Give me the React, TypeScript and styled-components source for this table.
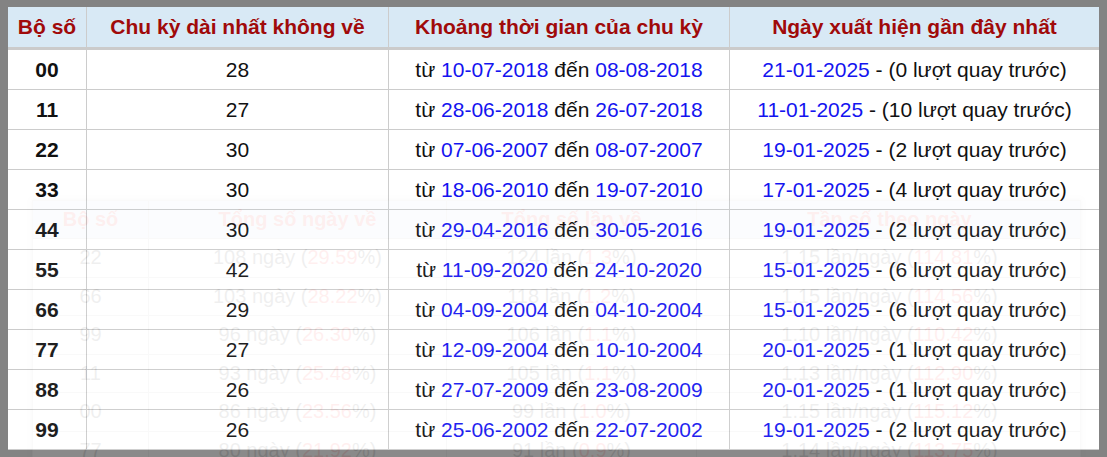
import React from "react";
import styled, { createGlobalStyle } from "styled-components";

const Global = createGlobalStyle`
  html, body { margin: 0; padding: 0; background: #ffffff; overflow: hidden; }
  body { font-family: "Liberation Sans", Arial, sans-serif; }
`;

const Frame = styled.div`
  position: relative;
  width: 1107px;
  height: 457px;
  box-sizing: border-box;
  border-style: solid;
  border-color: #838383;
  border-width: 7px 8px 7px 8px;
  background: #ffffff;
  font-family: "Liberation Sans", Arial, sans-serif;
`;

const Row = styled.div<{ $head?: boolean }>`
  display: grid;
  grid-template-columns: 78px 302px 341px 370px;
  height: ${(p) => (p.$head ? 43 : 40)}px;
  box-sizing: border-box;
  background: ${(p) => (p.$head ? "#d8e9f5" : "#ffffff")};
  border-bottom: ${(p) => (p.$head ? "3px solid #cbcbcb" : "1px solid #cccccc")};
`;

const Cell = styled.div<{ $head?: boolean; $bold?: boolean }>`
  display: flex;
  align-items: center;
  justify-content: center;
  white-space: nowrap;
  font-size: 21px;
  font-weight: ${(p) => (p.$head || p.$bold ? 700 : 400)};
  color: ${(p) => (p.$head ? "#a00a0a" : "#111111")};
  & + & { border-left: 1px solid #cccccc; }
`;

const DateText = styled.span`
  color: #1414f0;
`;

const Ghost = styled.div`
  position: absolute;
  left: 24px;
  top: 193px;
  width: 1049px;
  height: 257px;
  box-sizing: border-box;
  background: #ffffff;
  border: 1px solid #bbb;
  border-bottom: none;
  box-shadow: 0 0 4px rgba(0, 0, 0, 0.4);
  opacity: 0.06;
  pointer-events: none;
  overflow: hidden;
`;

const GhostRow = styled.div<{ $head?: boolean }>`
  display: grid;
  grid-template-columns: 115px 298px 250px 386px;
  height: ${(p) => (p.$head ? 38 : 38.5)}px;
  box-sizing: border-box;
  background: ${(p) => (p.$head ? "#c4def2" : "transparent")};
  border-bottom: 1px solid #aaa;
`;

const GhostCell = styled.div<{ $head?: boolean }>`
  display: flex;
  align-items: center;
  justify-content: center;
  white-space: nowrap;
  font-size: 20px;
  font-weight: ${(p) => (p.$head ? 700 : 400)};
  color: ${(p) => (p.$head ? "#e00000" : "#000000")};
  & + & { border-left: 1px solid #aaa; }
`;

const Pct = styled.span`
  color: #ff0000;
`;

type Item = {
  num: string;
  len: number;
  from: string;
  to: string;
  last: string;
  ago: number;
};

const items: Item[] = [
  { num: "00", len: 28, from: "10-07-2018", to: "08-08-2018", last: "21-01-2025", ago: 0 },
  { num: "11", len: 27, from: "28-06-2018", to: "26-07-2018", last: "11-01-2025", ago: 10 },
  { num: "22", len: 30, from: "07-06-2007", to: "08-07-2007", last: "19-01-2025", ago: 2 },
  { num: "33", len: 30, from: "18-06-2010", to: "19-07-2010", last: "17-01-2025", ago: 4 },
  { num: "44", len: 30, from: "29-04-2016", to: "30-05-2016", last: "19-01-2025", ago: 2 },
  { num: "55", len: 42, from: "11-09-2020", to: "24-10-2020", last: "15-01-2025", ago: 6 },
  { num: "66", len: 29, from: "04-09-2004", to: "04-10-2004", last: "15-01-2025", ago: 6 },
  { num: "77", len: 27, from: "12-09-2004", to: "10-10-2004", last: "20-01-2025", ago: 1 },
  { num: "88", len: 26, from: "27-07-2009", to: "23-08-2009", last: "20-01-2025", ago: 1 },
  { num: "99", len: 26, from: "25-06-2002", to: "22-07-2002", last: "19-01-2025", ago: 2 },
];

const ghostItems = [
  { n: "22", d: "108", dp: "29.59", l: "124", lp: "1.3", f: "1.15", fp: "114.81" },
  { n: "66", d: "103", dp: "28.22", l: "118", lp: "1.2", f: "1.15", fp: "114.56" },
  { n: "99", d: "96", dp: "26.30", l: "106", lp: "1.1", f: "1.10", fp: "110.42" },
  { n: "11", d: "93", dp: "25.48", l: "105", lp: "1.1", f: "1.13", fp: "112.90" },
  { n: "00", d: "86", dp: "23.56", l: "99", lp: "1.0", f: "1.15", fp: "115.12" },
  { n: "77", d: "80", dp: "21.92", l: "91", lp: "0.9", f: "1.14", fp: "113.75" },
];

export default function App() {
  return (
    <>
      <Global />
      <Frame>
        <Row $head>
          <Cell $head>Bộ số</Cell>
          <Cell $head>Chu kỳ dài nhất không về</Cell>
          <Cell $head>Khoảng thời gian của chu kỳ</Cell>
          <Cell $head>Ngày xuất hiện gần đây nhất</Cell>
        </Row>
        {items.map((it) => (
          <Row key={it.num}>
            <Cell $bold>{it.num}</Cell>
            <Cell>{it.len}</Cell>
            <Cell>
              từ&nbsp;<DateText>{it.from}</DateText>&nbsp;đến&nbsp;<DateText>{it.to}</DateText>
            </Cell>
            <Cell>
              <DateText>{it.last}</DateText>&nbsp;- ({it.ago} lượt quay trước)
            </Cell>
          </Row>
        ))}
        <Ghost aria-hidden="true">
          <GhostRow $head>
            <GhostCell $head>Bộ số</GhostCell>
            <GhostCell $head>Tổng số ngày về</GhostCell>
            <GhostCell $head>Tổng số lần về</GhostCell>
            <GhostCell $head>Tần số theo ngày</GhostCell>
          </GhostRow>
          {ghostItems.map((g) => (
            <GhostRow key={g.n}>
              <GhostCell>{g.n}</GhostCell>
              <GhostCell>
                {g.d} ngày (<Pct>{g.dp}</Pct>%)
              </GhostCell>
              <GhostCell>
                {g.l} lần ( <Pct>{g.lp}</Pct>%)
              </GhostCell>
              <GhostCell>
                {g.f} lần/ngày (<Pct>{g.fp}</Pct>%)
              </GhostCell>
            </GhostRow>
          ))}
        </Ghost>
      </Frame>
    </>
  );
}
